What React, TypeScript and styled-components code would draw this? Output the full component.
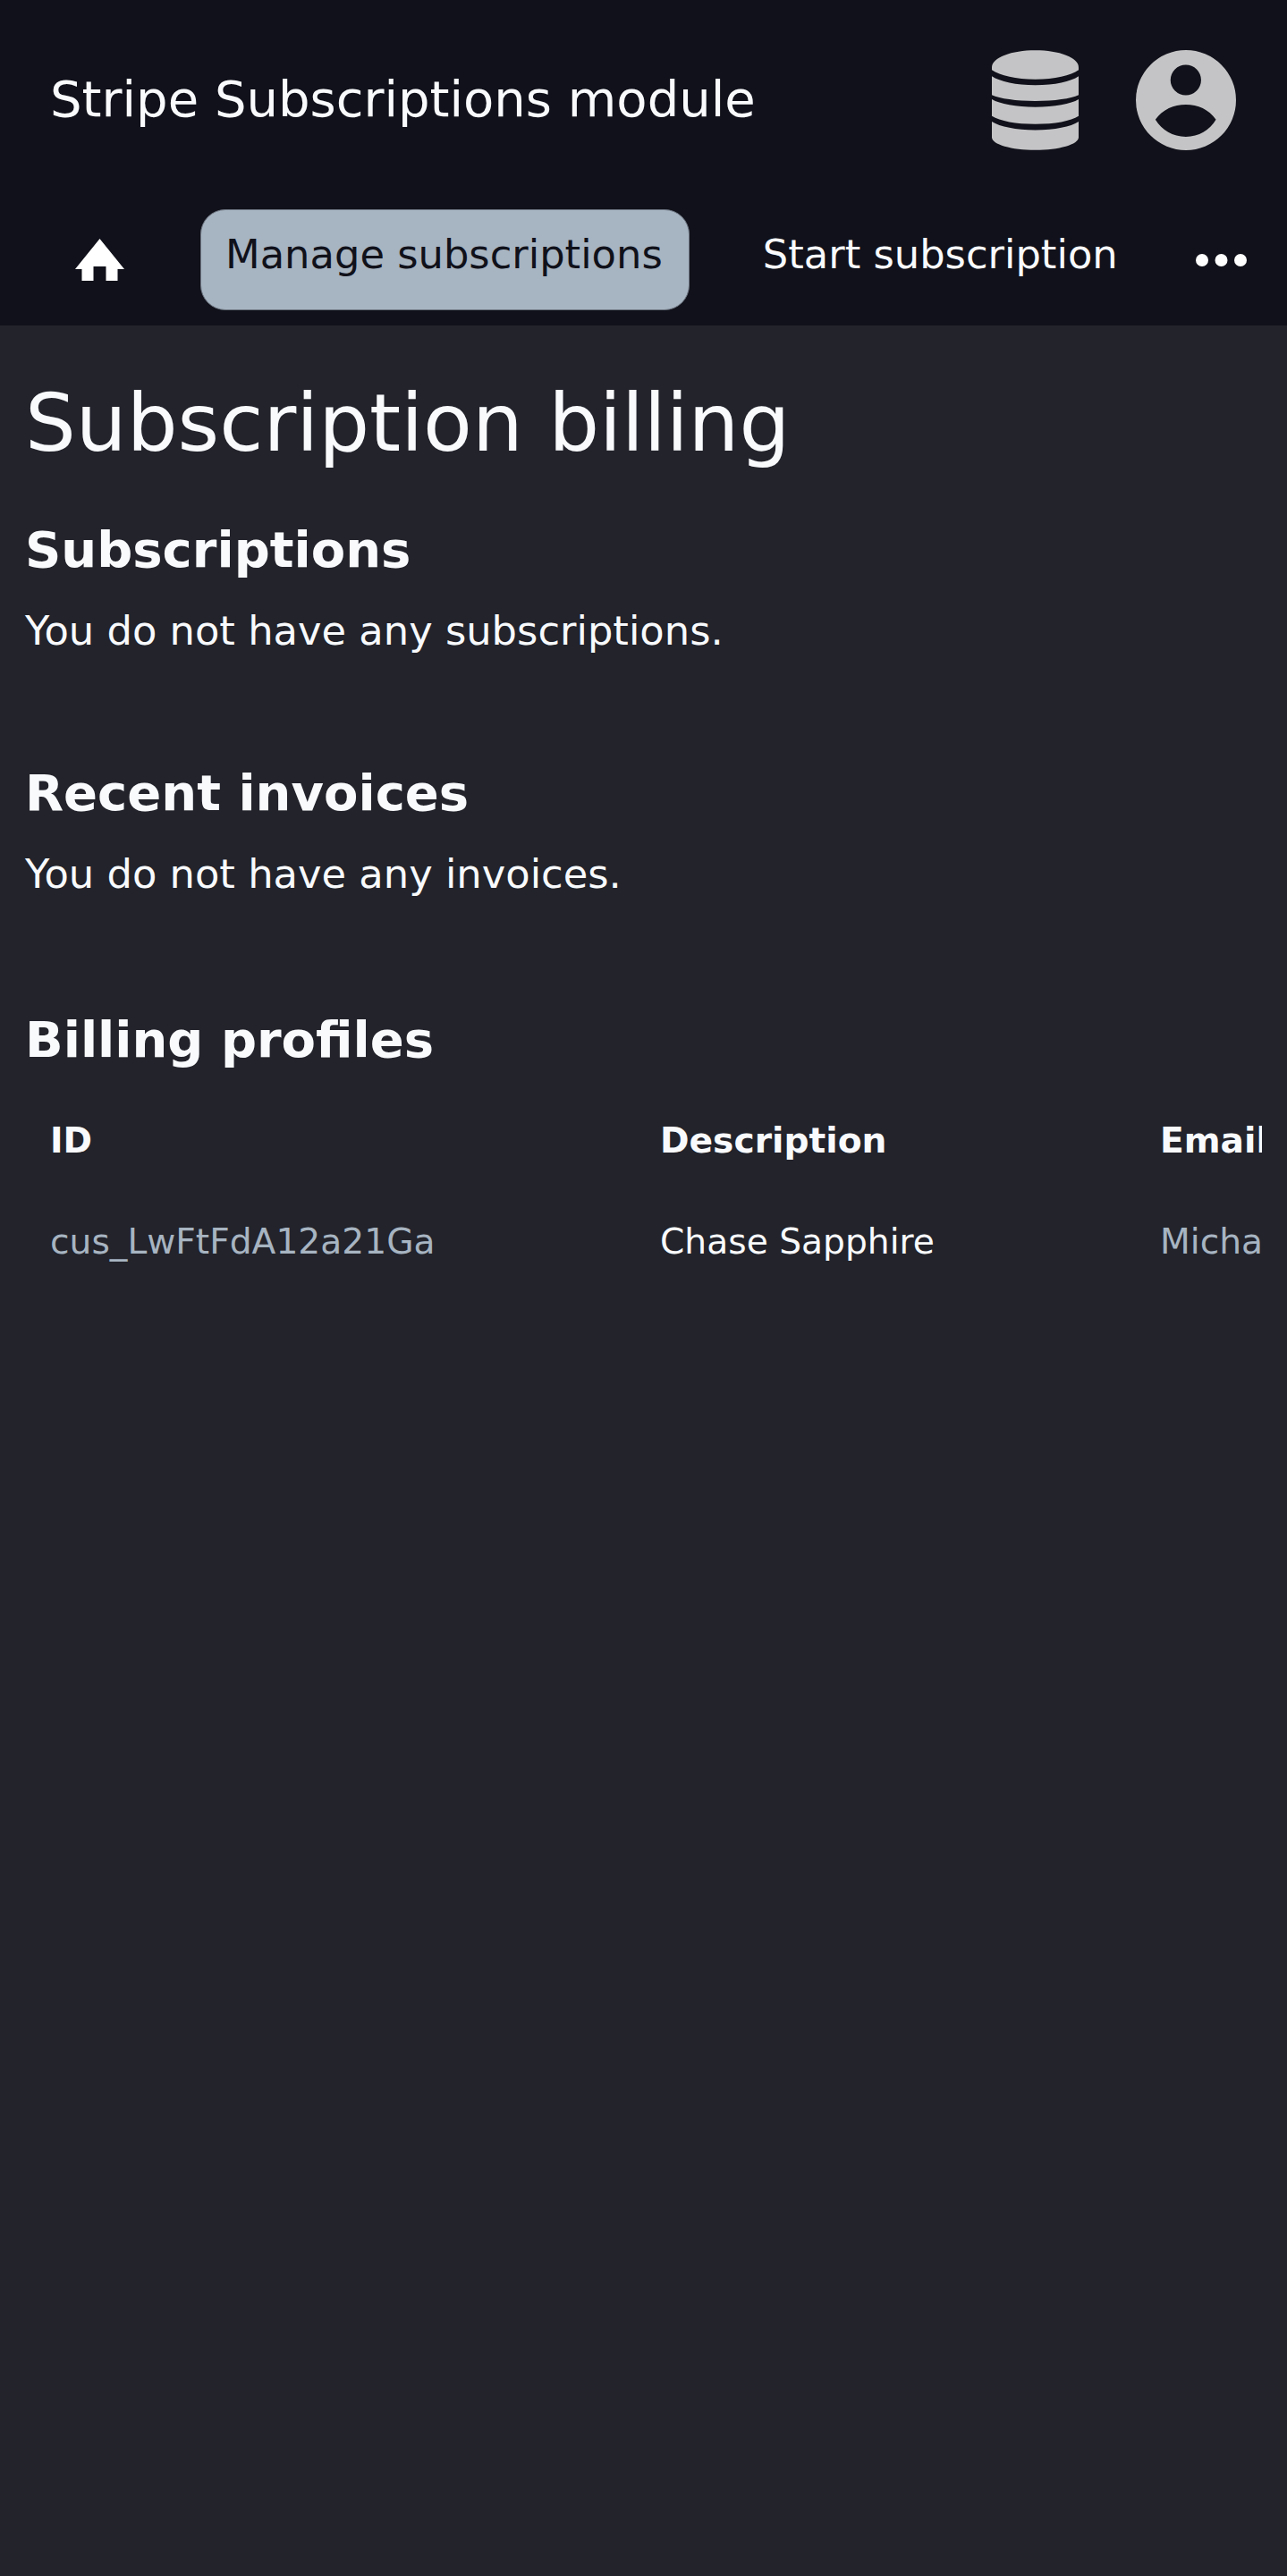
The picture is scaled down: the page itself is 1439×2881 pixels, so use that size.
import styled, { createGlobalStyle } from "styled-components";

const GlobalStyle = createGlobalStyle`
  html, body {
    margin: 0;
    padding: 0;
    background: #22232b;
  }
  body {
    font-family: "DejaVu Sans", sans-serif;
    color: #f8fafc;
  }
  * {
    box-sizing: border-box;
  }
`;

const Page = styled.div`
  min-height: 2881px;
  background: #22232b;
`;

const Header = styled.header`
  height: 364px;
  background: #10111a;
  display: flex;
  flex-direction: column;
`;

const TopBar = styled.div`
  height: 223px;
  padding: 0 57px 0 56px;
  display: flex;
  align-items: center;
  justify-content: space-between;
`;

const AppTitle = styled.div`
  font-size: 56px;
  margin-bottom: 2px;
`;

const TopIcons = styled.div`
  display: flex;
  align-items: center;
  gap: 64px;
`;

const NavBar = styled.nav`
  display: flex;
  align-items: center;
  padding: 11px 45px 0 84px;
`;

const HomeLink = styled.a`
  display: flex;
  margin-right: 85px;
`;

const NavItem = styled.a<{ $active?: boolean }>`
  height: 113px;
  padding: 24px 29px 0 27px;
  font-size: 44.8px;
  line-height: 52px;
  border-radius: 28px;
  white-space: nowrap;
  color: ${(p) => (p.$active ? "#10111a" : "#f8fafc")};
  background: ${(p) => (p.$active ? "#a7b4c1" : "transparent")};
  border: 1px solid ${(p) => (p.$active ? "#6c7480" : "transparent")};

  & + & {
    margin-left: 54px;
  }
`;

const MoreLink = styled.a`
  display: flex;
  margin-left: auto;
`;

const Main = styled.main`
  padding: 55px 28px 0;
`;

const PageTitle = styled.h1`
  margin: 0;
  font-size: 89.6px;
  line-height: 108px;
  font-weight: 400;
`;

const Section = styled.section<{ $gap: number }>`
  margin-top: ${(p) => p.$gap}px;
`;

const SectionTitle = styled.h2`
  margin: 0;
  font-size: 56px;
  line-height: 68px;
  font-weight: 700;
`;

const Note = styled.p`
  margin: 29px 0 0;
  font-size: 44.8px;
  line-height: 56px;
`;

const TableWrap = styled.div`
  margin-top: 22px;
  overflow: hidden;
`;

const ProfileTable = styled.table`
  width: 1841px;
  table-layout: fixed;
  border-collapse: collapse;
  font-size: 39.2px;
  line-height: 57px;
`;

const HeadCell = styled.th<{ $width: number }>`
  width: ${(p) => p.$width}px;
  padding: 28px;
  text-align: left;
  font-weight: 700;
  white-space: nowrap;
`;

const Cell = styled.td<{ $muted?: boolean }>`
  padding: 28px;
  white-space: nowrap;
  color: ${(p) => (p.$muted ? "#a7b4c1" : "#f8fafc")};
`;

const DatabaseIcon = () => (
  <svg width="97" height="112" viewBox="0 0 96.700 111.300" fill="#c4c4c6">
    <path d="M0 19C0 8 22 0 48.400 0C75 0 96.700 8 96.700 19V22C88 28 70 32.500 48.400 32.500C27 32.500 9 28 0 22Z" />
    <path d="M0 29C9 35 27 39 48.400 39C70 39 88 35 96.700 29V50C88 54 70 56.700 48.400 56.700C27 56.700 9 54 0 50Z" />
    <path d="M0 54.700C9 60 27 63.300 48.400 63.300C70 63.300 88 60 96.700 54.700V73.300C88 79 70 82.300 48.400 82.300C27 82.300 9 79 0 73.300Z" />
    <path d="M0 79.700C9 85.500 27 89 48.400 89C70 89 88 85.500 96.700 79.700V97C96.700 105 75 111.300 48.400 111.300C22 111.300 0 105 0 97Z" />
  </svg>
);

const UserIcon = () => (
  <svg width="112" height="112" viewBox="0 0 111.300 111.300">
    <path
      fill="#c4c4c6"
      fillRule="evenodd"
      d="M55.650 0A55.650 55.650 0 1 1 55.650 111.300A55.650 55.650 0 1 1 55.650 0ZM55.500 16.300A17 17 0 1 0 55.500 50.300A17 17 0 1 0 55.500 16.300ZM21.700 77.300C30 66 42 60.700 55.600 60.700C69 60.700 81 66 89 77.300C82 89 70 96.300 55.600 96.300C41 96.300 29 89 21.700 77.300Z"
    />
  </svg>
);

const HomeIcon = () => (
  <svg width="55" height="47" viewBox="0 0 55 47" fill="#fff">
    <path d="M27.500 0L55 34H47.500V47H34.500V31H20.500V47H7.500V34H0Z" />
  </svg>
);

const DotsIcon = () => (
  <svg width="57" height="14" viewBox="0 0 57 14" fill="#fff">
    <circle cx="7" cy="7" r="7" />
    <circle cx="28.500" cy="7" r="7" />
    <circle cx="50" cy="7" r="7" />
  </svg>
);

const App = () => {
  return (
    <Page>
      <GlobalStyle />
      <Header>
        <TopBar>
          <AppTitle>Stripe Subscriptions module</AppTitle>
          <TopIcons>
            <DatabaseIcon />
            <UserIcon />
          </TopIcons>
        </TopBar>
        <NavBar>
          <HomeLink>
            <HomeIcon />
          </HomeLink>
          <NavItem $active>Manage subscriptions</NavItem>
          <NavItem>Start subscription</NavItem>
          <MoreLink>
            <DotsIcon />
          </MoreLink>
        </NavBar>
      </Header>
      <Main>
        <PageTitle>Subscription billing</PageTitle>
        <Section $gap={54}>
          <SectionTitle>Subscriptions</SectionTitle>
          <Note>You do not have any subscriptions.</Note>
        </Section>
        <Section $gap={119}>
          <SectionTitle>Recent invoices</SectionTitle>
          <Note>You do not have any invoices.</Note>
        </Section>
        <Section $gap={123}>
          <SectionTitle>Billing profiles</SectionTitle>
          <TableWrap>
            <ProfileTable>
              <thead>
                <tr>
                  <HeadCell $width={682}>ID</HeadCell>
                  <HeadCell $width={559}>Description</HeadCell>
                  <HeadCell $width={600}>Email</HeadCell>
                </tr>
              </thead>
              <tbody>
                <tr>
                  <Cell $muted>cus_LwFtFdA12a21Ga</Cell>
                  <Cell>Chase Sapphire</Cell>
                  <Cell $muted>Michael</Cell>
                </tr>
              </tbody>
            </ProfileTable>
          </TableWrap>
        </Section>
      </Main>
    </Page>
  );
};

export default App;
